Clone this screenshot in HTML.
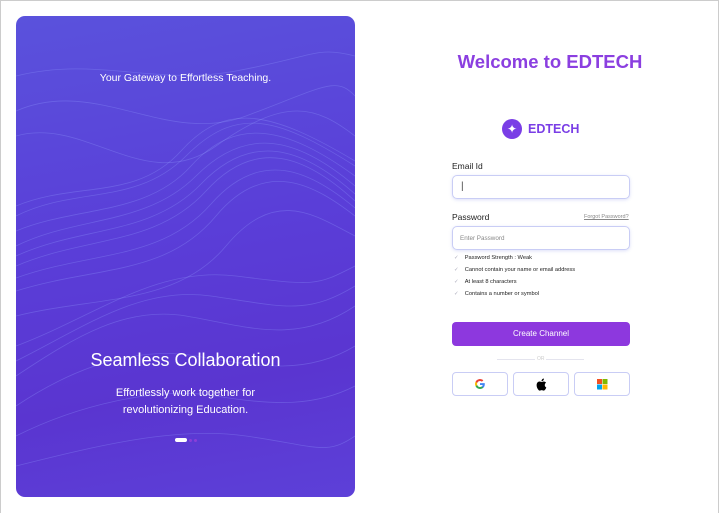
<!DOCTYPE html>
<html><head><meta charset="utf-8"><style>
*{margin:0;padding:0;box-sizing:border-box}
body{width:719px;height:513px;background:#fff;font-family:"Liberation Sans",sans-serif;position:relative;overflow:hidden}
.fr{position:absolute;left:0;top:0;width:719px;height:513px;border:1px solid #ccc;border-bottom:none}
.card{position:absolute;left:16px;top:16px;width:339px;height:481px;border-radius:9px;overflow:hidden;background:linear-gradient(170deg,#5a52dc 0%,#5a3ed8 45%,#5a35d0 75%,#5d40d8 100%)}
.card svg{position:absolute;left:0;top:0}
.t{position:absolute;color:#fff;text-align:center;width:100%}
.a{position:absolute;font-size:8.5px;color:#222}
.inp{position:absolute;left:452px;width:178px;height:24px;border:1px solid #c9cdf5;border-radius:5px;box-shadow:0 1px 3px rgba(120,130,230,.25)}
.chk{position:absolute;left:454px;font-size:5.7px;color:#222}
.chk span{color:#aab;margin-right:6px}
.sb{position:absolute;top:372px;width:56px;height:24px;border:1px solid #c9cdf5;border-radius:4px;display:flex;align-items:center;justify-content:center}
</style></head><body>
<div class="fr"></div>
<div class="card">
<svg width="339" height="481" viewBox="0 0 339 481" fill="none" stroke="rgba(150,160,255,0.3)" stroke-width="0.8">
<path d="M0 95 C80 60 150 130 230 100 S320 60 339 80"/>
<path d="M0 120 C70 100 130 180 200 130 S300 90 339 120"/>
<path d="M0 190 C60 165 120 185 165 135 S255 95 339 145"/>
<path d="M0 200 C60 170 120 190 170 140 S260 100 339 150"/>
<path d="M0 215 C60 190 130 200 175 150 S270 110 339 160"/>
<path d="M0 230 C60 200 130 210 180 160 S280 120 339 170"/>
<path d="M0 240 C65 210 135 220 185 168 S285 130 339 178"/>
<path d="M0 250 C70 220 140 230 190 175 S290 140 339 185"/>
<path d="M0 262 C75 235 145 245 195 188 S295 155 339 192"/>
<path d="M0 275 C80 250 150 260 200 200 S300 170 339 200"/>
<path d="M0 300 C80 280 160 290 210 230 S300 200 339 220"/>
<path d="M0 330 C80 300 140 250 220 260 S300 270 339 250"/>
<path d="M0 345 C70 310 125 270 195 280 S290 300 339 270"/>
<path d="M0 360 C60 320 110 290 170 300 S280 330 339 290"/>
<path d="M0 390 C60 350 120 330 180 340 S290 360 339 330"/>
<path d="M0 420 C60 390 140 370 200 380 S300 390 339 370"/>
<path d="M0 450 C80 430 160 410 230 420 S310 440 339 420"/>
<path d="M0 60 C80 40 140 70 220 55 S300 30 339 40"/>
</svg>
<div class="t" style="top:56px;font-size:10.5px">Your Gateway to Effortless Teaching.</div>
<div class="t" style="top:334px;font-size:18px">Seamless Collaboration</div>
<div class="t" style="top:369px;font-size:11px;line-height:17px">Effortlessly work together for<br>revolutionizing Education.</div>
<div style="position:absolute;left:159px;top:422px;width:12px;height:4px;border-radius:2px;background:#fff"></div>
<div style="position:absolute;left:173px;top:423px;width:3px;height:3px;border-radius:50%;background:#8a3ed8"></div>
<div style="position:absolute;left:178px;top:423px;width:3px;height:3px;border-radius:50%;background:#8a3ed8"></div>
</div>

<div style="position:absolute;left:440px;top:51px;width:220px;text-align:center;font-size:18.5px;font-weight:bold;color:#8b3fe0">Welcome to EDTECH</div>
<div style="position:absolute;left:502px;top:119px;width:20px;height:20px;border-radius:50%;background:#7a3ee6;color:#fff;font-size:12px;text-align:center;line-height:20px">✦</div>
<div style="position:absolute;left:528px;top:122px;font-size:12.5px;font-weight:bold;color:#7a3ee6">EDTECH</div>

<div class="a" style="left:452px;top:161px">Email Id</div>
<div class="inp" style="top:175px"><span style="position:absolute;left:8px;top:5px;font-size:10px;color:#444">|</span></div>
<div class="a" style="left:452px;top:212px">Password</div>
<div style="position:absolute;left:584px;top:214px;font-size:5.5px;color:#888;text-decoration:underline">Forgot Password?</div>
<div class="inp" style="top:226px"><span style="position:absolute;left:7px;top:8px;font-size:6.3px;color:#888">Enter Password</span></div>
<div class="chk" style="top:255px"><span>✓</span>Password Strength : Weak</div>
<div class="chk" style="top:267px"><span>✓</span>Cannot contain your name or email address</div>
<div class="chk" style="top:279px"><span>✓</span>At least 8 characters</div>
<div class="chk" style="top:291px"><span>✓</span>Contains a number or symbol</div>

<div style="position:absolute;left:452px;top:322px;width:178px;height:24px;border-radius:4px;background:#8d38de;color:#fff;font-size:8px;text-align:center;line-height:24px">Create Channel</div>
<div style="position:absolute;left:497px;top:359px;width:38px;height:1px;background:#e4e4ee"></div>
<div style="position:absolute;left:537px;top:356px;font-size:5px;color:#ccc">OR</div>
<div style="position:absolute;left:546px;top:359px;width:38px;height:1px;background:#e4e4ee"></div>

<div class="sb" style="left:452px"><svg width="12" height="12" viewBox="0 0 24 24"><path d="M21.6 12.2c0-.7-.1-1.4-.2-2H12v3.9h5.4a4.6 4.6 0 0 1-2 3v2.5h3.2c1.9-1.7 3-4.3 3-7.4z" fill="#4285F4"/><path d="M12 22c2.7 0 5-.9 6.6-2.4l-3.2-2.5c-.9.6-2 1-3.4 1-2.6 0-4.8-1.8-5.600-4.100H3.1v2.6A10 10 0 0 0 12 22z" fill="#34A853"/><path d="M6.4 14a6 6 0 0 1 0-3.9V7.5H3.1a10 10 0 0 0 0 9z" fill="#FBBC05"/><path d="M12 6c1.5 0 2.8.5 3.8 1.5l2.9-2.9A10 10 0 0 0 3.1 7.5L6.4 10C7.2 7.8 9.4 6 12 6z" fill="#EA4335"/></svg></div>
<div class="sb" style="left:513px"><svg width="12" height="13" viewBox="0 0 24 26"><path d="M19.6 13.8c0-3 2.5-4.4 2.6-4.5-1.4-2-3.6-2.3-4.4-2.4-1.9-.2-3.6 1.1-4.6 1.1s-2.4-1.1-4-1c-2 0-3.9 1.2-5 3-2.1 3.7-.5 9.2 1.5 12.2 1 1.5 2.2 3.1 3.8 3 1.5-.1 2.1-1 3.9-1s2.3 1 3.9 1c1.6 0 2.7-1.5 3.7-3 1.2-1.7 1.6-3.3 1.7-3.4-.1 0-3.2-1.2-3.2-4.9zM16.6 4.8c.8-1 1.4-2.4 1.2-3.8-1.2.1-2.7.8-3.5 1.8-.8.9-1.5 2.3-1.3 3.7 1.3.1 2.7-.7 3.6-1.7z" fill="#000"/></svg></div>
<div class="sb" style="left:574px"><svg width="11" height="11" viewBox="0 0 22 22"><rect width="10" height="10" fill="#F25022"/><rect x="11" width="10" height="10" fill="#7FBA00"/><rect y="11" width="10" height="10" fill="#00A4EF"/><rect x="11" y="11" width="10" height="10" fill="#FFB900"/></svg></div>
</body></html>
